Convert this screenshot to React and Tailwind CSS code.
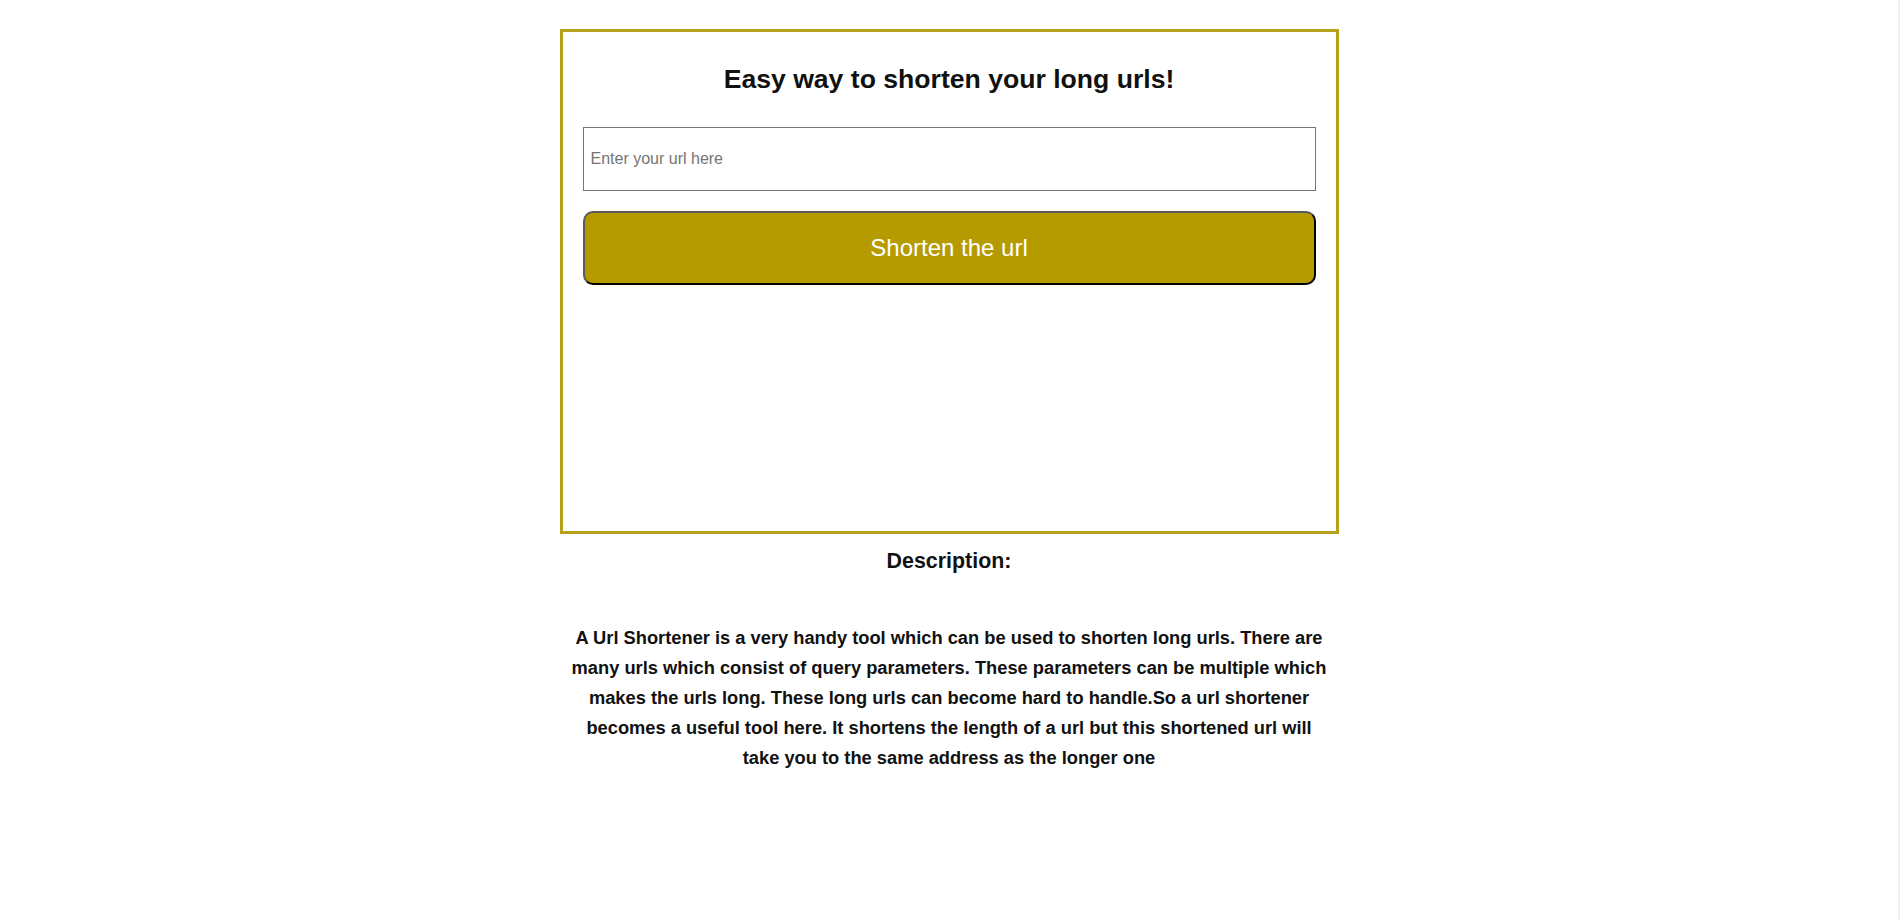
export default function App() {
  return (
    <div className="min-h-screen w-full bg-white border-r-2 border-[#efefef] font-['Liberation_Sans',Arial,sans-serif]">
      <div className="w-[779px] mx-auto pt-[29px] flex flex-col">
        <div className="h-[505px] border-[3px] border-[#b5a11a] px-[20px] flex flex-col">
          <h1 className="text-center text-[26.6px] leading-[32px] font-bold text-[#111] mt-[31px]">
            Easy way to shorten your long urls!
          </h1>
          <input
            type="text"
            placeholder="Enter your url here"
            className="mt-[32px] h-[64px] w-full border border-[#767676] px-[7px] text-[16px] text-black placeholder:text-[#757575] outline-none"
          />
          <button className="mt-[20px] h-[74px] w-full rounded-[10px] bg-[#b59b00] border-2 border-t-[#5a5a5a] border-l-[#5a5a5a] border-b-black border-r-black text-white text-[24px]">
            Shorten the url
          </button>
        </div>
        <h3 className="text-center text-[21.4px] leading-[24px] font-bold text-[#111] mt-[15px]">
          Description:
        </h3>
        <p className="text-center text-[18.3px] leading-[30px] font-bold text-[#111] mt-[50px]">
          A Url Shortener is a very handy tool which can be used to shorten long urls. There are
          <br />
          many urls which consist of query parameters. These parameters can be multiple which
          <br />
          makes the urls long. These long urls can become hard to handle.So a url shortener
          <br />
          becomes a useful tool here. It shortens the length of a url but this shortened url will
          <br />
          take you to the same address as the longer one
        </p>
      </div>
    </div>
  );
}
